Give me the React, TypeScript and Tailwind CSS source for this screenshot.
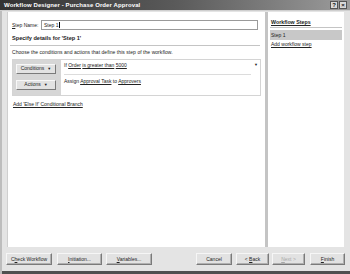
import React from "react";

function Btn({ label, w, disabled, u }: { label: string; w: string; disabled?: boolean; u?: number }) {
  const chars = label.split("");
  return (
    <div
      className={`${w} h-[12px] flex items-center justify-center bg-[#e2e2e2] border border-t-[#f6f6f6] border-l-[#f6f6f6] border-b-[#7a7a7a] border-r-[#7a7a7a] shadow-[inset_-1px_-1px_0_#b0b0b0] text-[5px] ${disabled ? "text-[#a8a8a8]" : "text-[#222]"}`}
    >
      <span>
        {chars.map((c, i) => (
          <span key={i} className={i === u ? "underline" : ""}>
            {c}
          </span>
        ))}
      </span>
    </div>
  );
}

export default function App() {
  return (
    <div className="w-[350px] h-[274px] bg-[#e4e4e4] flex flex-col overflow-hidden font-['Liberation_Sans',Arial,sans-serif] text-[5px] text-[#222] leading-none">
      {/* Title bar */}
      <div className="h-[11px] shrink-0 flex items-center justify-between pl-[4px] pr-[2px] bg-gradient-to-r from-[#333333] via-[#5a5a5a] to-[#9c9c9c] border-b border-[#cfcfcf]">
        <span className="text-white font-bold text-[6px] tracking-[0.1px]">Workflow Designer - Purchase Order Approval</span>
        <div className="flex gap-[1px] mr-[1px]">
          <div className="w-[8px] h-[8px] bg-[#d8d8d8] border border-[#555] flex items-center justify-center text-[6px] font-bold text-[#111]">?</div>
          <div className="w-[8px] h-[8px] bg-[#d8d8d8] border border-[#555] flex items-center justify-center text-[6px] font-bold text-[#111]">×</div>
        </div>
      </div>

      {/* Body */}
      <div className="flex-1 flex flex-col border-l-[2px] border-[#bdbdbd] bg-[#e4e4e4]">
        <div className="flex h-[235px] mt-[1px] pl-[5px] pr-[6px]">
          {/* Left panel */}
          <div className="flex-1 bg-white border-l border-[#cfcfcf] pt-[8px] pl-[4px] pr-[4px] flex flex-col">
            <div className="flex items-center h-[10px] pr-[3px]">
              <span className="w-[29px]"><span className="underline">S</span>tep Name:</span>
              <div className="flex-1 h-[10px] border border-[#9a9a9a] bg-white flex items-center pl-[2px]">
                Step 1<span className="ml-[1px] w-[0.5px] h-[6px] bg-black" />
              </div>
            </div>
            <div className="mt-[6px] font-bold text-[5.6px] pb-[3px] border-b border-[#c4c4c4] -mx-[2px] px-[2px] mr-[1px]">
              Specify details for 'Step 1'
            </div>
            <div className="mt-[4px] tracking-[0.05px]">Choose the conditions and actions that define this step of the workflow.</div>
            <div className="mt-[4px] h-[37px] border border-[#d4d4d4] flex">
              <div className="w-[48px] bg-[#d6d6d6] flex flex-col pl-[3px] pt-[4px] gap-[6px]">
                <div className="w-[40px] h-[10px] bg-[#e2e2e2] border border-t-[#f8f8f8] border-l-[#f8f8f8] border-b-[#7a7a7a] border-r-[#7a7a7a] flex items-center justify-center gap-[3px]">
                  <span>Conditions</span>
                  <span className="text-[4px]">▼</span>
                </div>
                <div className="w-[40px] h-[10px] bg-[#e2e2e2] border border-t-[#f8f8f8] border-l-[#f8f8f8] border-b-[#7a7a7a] border-r-[#7a7a7a] flex items-center justify-center gap-[3px]">
                  <span>Actions</span>
                  <span className="text-[4px]">▼</span>
                </div>
              </div>
              <div className="flex-1 flex flex-col pl-[3px] pr-[3px] pt-[3px]">
                <div className="flex justify-between pb-[6px] border-b border-[#dcdcdc] mr-[6px] relative">
                  <span>
                    If <span className="underline">Order</span> <span className="underline">is greater than</span> <span className="underline">5000</span>
                  </span>
                  <span className="absolute right-[-7px] top-[0px] text-[4px]">▼</span>
                </div>
                <div className="mt-[4px]">
                  Assign <span className="underline">Approval Task</span> to <span className="underline">Approvers</span>
                </div>
              </div>
            </div>
            <div className="mt-[6px] pl-[1px]">
              <span className="underline">Add 'Else If' Conditional Branch</span>
            </div>
          </div>

          {/* Divider */}
          <div className="w-[3px] bg-[#c4c4c4]" />

          {/* Right panel */}
          <div className="w-[76px] bg-white pt-[8px] pl-[2px] pr-[2px] flex flex-col">
            <div className="font-bold text-[5.3px] underline pl-[1px] pb-[2px] border-b border-[#c4c4c4]">Workflow Steps</div>
            <div className="mt-[2px] h-[10px] bg-[#c8c8c8] flex items-center pl-[1px]">Step 1</div>
            <div className="mt-[2px] pl-[1px] underline">Add workflow step</div>
          </div>
        </div>

        {/* Bottom buttons */}
        <div className="flex-1 flex items-start pt-[6px] pl-[4px] pr-[5px]">
          <Btn label="Check Workflow" w="w-[46px]" u={1} />
          <div className="w-[5px]" />
          <Btn label="Initiation..." w="w-[45px]" u={0} />
          <div className="w-[4px]" />
          <Btn label="Variables..." w="w-[46px]" u={0} />
          <div className="flex-1" />
          <Btn label="Cancel" w="w-[36px]" />
          <div className="w-[4px]" />
          <Btn label="< Back" w="w-[33px]" u={2} />
          <div className="w-[3px]" />
          <Btn label="Next >" w="w-[33px]" disabled u={0} />
          <div className="w-[5px]" />
          <Btn label="Finish" w="w-[35px]" u={0} />
        </div>
        <div className="h-[3px] bg-[#505050]" />
      </div>
    </div>
  );
}
